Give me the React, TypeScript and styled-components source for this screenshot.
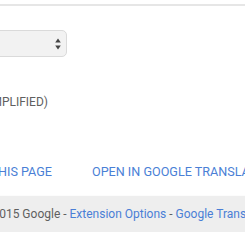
import styled, { createGlobalStyle } from "styled-components"

const GlobalStyle = createGlobalStyle`
  html, body {
    margin: 0;
    padding: 0;
    background: #ffffff;
    overflow: hidden;
  }
  body {
    font-family: Roboto, "Liberation Sans", sans-serif;
  }
`

export default function App() {
  return (
    <>
      <GlobalStyle />
      <Popup>
        <Header />
        <Body>
          <Select>
            <span>English</span>
            <svg width="6" height="12" viewBox="0 0 6 12">
              <path d="M3 0.5 L5.8 4.6 L0.2 4.6 Z" fill="#444" />
              <path d="M3 11.5 L5.8 7.4 L0.2 7.4 Z" fill="#444" />
            </svg>
          </Select>
          <Language>Chinese (Simplified)</Language>
          <Actions>
            <Action $width={212}>Translate this page</Action>
            <Action>Open in Google Translate</Action>
          </Actions>
        </Body>
        <Footer>
          © 2015 Google - <FooterLink>Extension Options</FooterLink> -{" "}
          <FooterLink>Google Translate</FooterLink>
        </Footer>
      </Popup>
    </>
  )
}

const Popup = styled.div`
  width: 560px;
  margin-left: -160px;
`

const Header = styled.div`
  height: 4px;
  border-bottom: 2px solid #e6e6e6;
`

const Body = styled.div`
  display: flex;
  flex-direction: column;
`

const Select = styled.div`
  box-sizing: border-box;
  margin: 24px 0 0 16px;
  width: 211px;
  height: 27px;
  padding: 0 5px 0 10px;
  display: flex;
  align-items: center;
  justify-content: space-between;
  background: #f2f2f2;
  border: 1px solid #dadada;
  border-radius: 5px;
  font-size: 12.5px;
  color: #333;
`

const Language = styled.div`
  margin-top: 37px;
  width: 208px;
  text-align: right;
  font-size: 12px;
  line-height: 16px;
  color: #606060;
  text-transform: uppercase;
`

const Actions = styled.div`
  margin-top: 54px;
  display: flex;
  gap: 40px;
`

const Action = styled.div<{ $width?: number }>`
  width: ${(p) => (p.$width ? `${p.$width}px` : "auto")};
  text-align: right;
  font-size: 12.6px;
  line-height: 16px;
  color: #4a7fd6;
  text-transform: uppercase;
  white-space: nowrap;
`

const Footer = styled.div`
  margin-top: 16px;
  height: 36px;
  line-height: 36px;
  padding-left: 140px;
  background: #eeeeee;
  box-shadow: 0 2px 3px rgba(0, 0, 0, 0.25);
  font-size: 12px;
  color: #5f5f5f;
  white-space: nowrap;
`

const FooterLink = styled.span`
  color: #4a7fd6;
`
